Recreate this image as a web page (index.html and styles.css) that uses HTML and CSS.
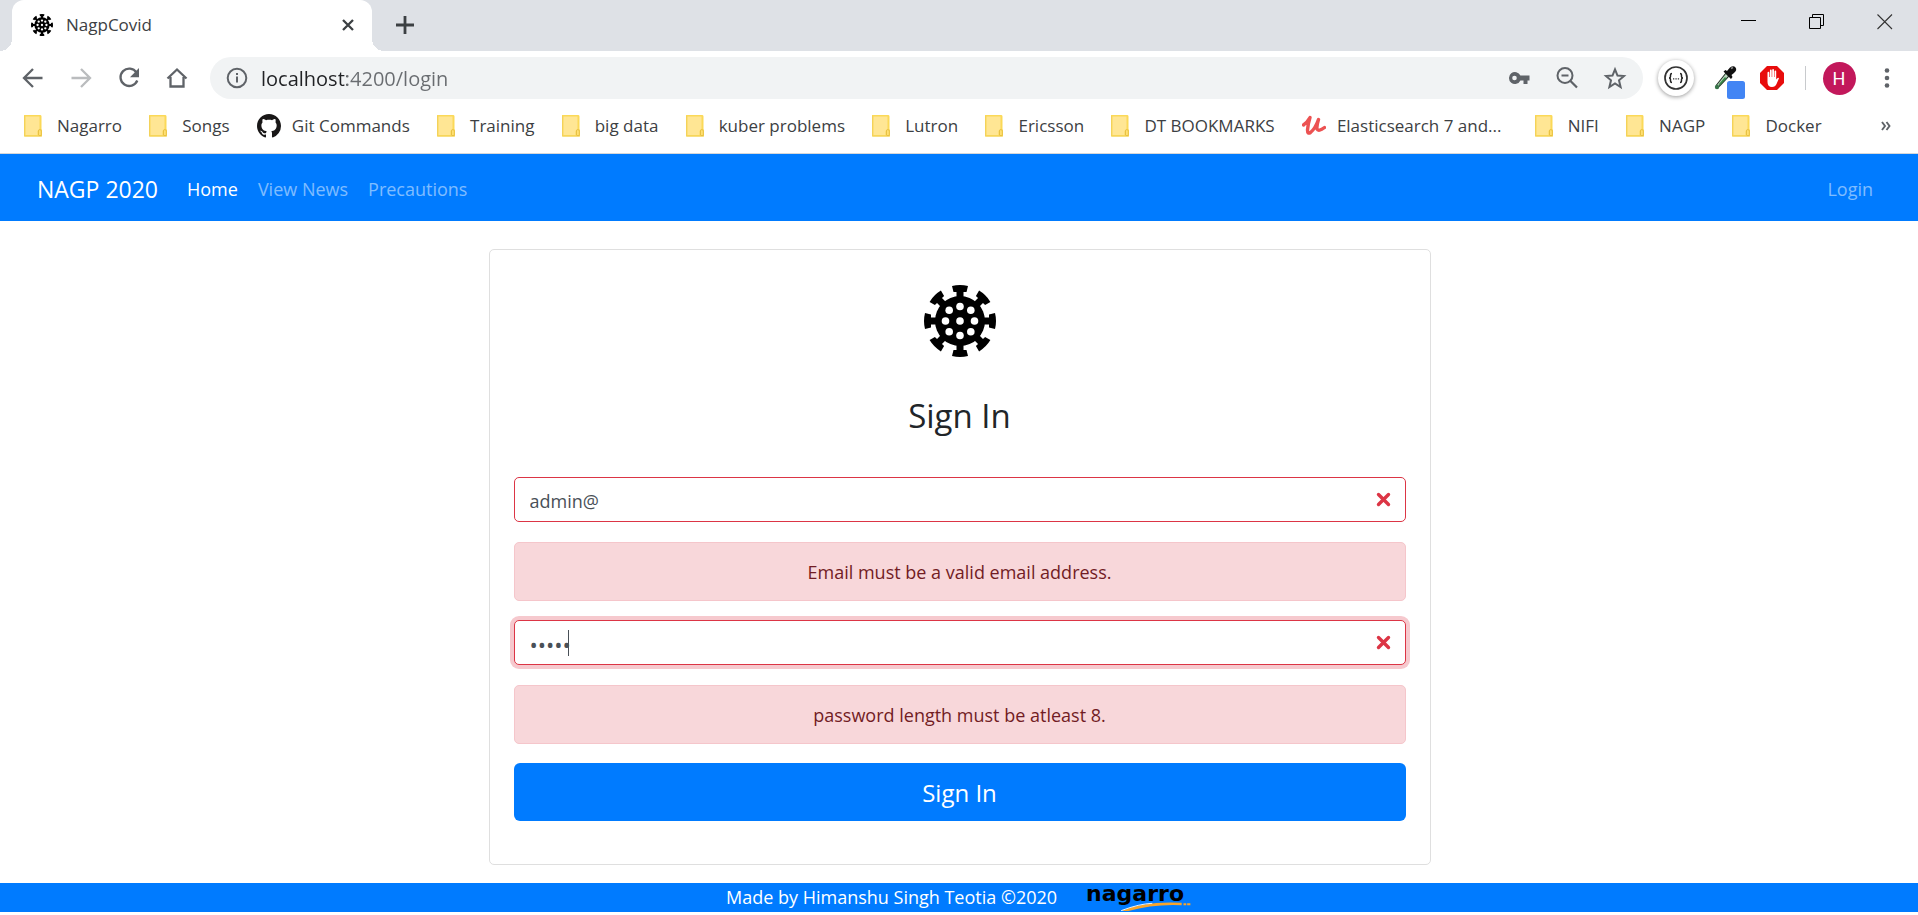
FILE: index.html
```html
<!DOCTYPE html>
<html lang="en">
<head>
<meta charset="utf-8">
<title>NagpCovid</title>
<link rel="stylesheet" href="styles.css">
</head>
<body>
<svg class="defs" aria-hidden="true">
  <symbol id="virus" viewBox="-36 -36 72 72">
    <path id="arm" d="M-3.5-22V-29H-6.5L-8-35Q0-37 8-35L6.5-29H3.5V-22Z"/>
    <use href="#arm" transform="rotate(45)"/><use href="#arm" transform="rotate(90)"/><use href="#arm" transform="rotate(135)"/>
    <use href="#arm" transform="rotate(180)"/><use href="#arm" transform="rotate(225)"/><use href="#arm" transform="rotate(270)"/><use href="#arm" transform="rotate(315)"/>
    <circle r="25"/>
    <g fill="#fff">
      <circle r="3.8"/><circle cx="14.5" r="3.8"/><circle cx="-14.5" r="3.8"/><circle cy="14.5" r="3.8"/><circle cy="-14.5" r="3.8"/>
      <circle cx="10.8" cy="10.8" r="3.8"/><circle cx="-10.8" cy="10.8" r="3.8"/><circle cx="10.8" cy="-10.8" r="3.8"/><circle cx="-10.8" cy="-10.8" r="3.8"/>
    </g>
  </symbol>
  <symbol id="folder" viewBox="0 0 18 22">
    <path d="M0 0H16.5Q17.5 0 17.5 1.5V14L18 15V21.5H0Z" fill="#fbd958"/>
    <path d="M1.5 1.5H15.5V14L13.5 16V20H1.5Z" fill="#ffe694"/>
    <path d="M.5 1V21H17.5" fill="none" stroke="#f3d25a"/>
    <path d="M14.5 20V16Q14.5 14.5 15.8 14.5T17.3 16V20.5H14.5" fill="#ffe072" stroke="#e8c144"/>
  </symbol>
</svg>

<header class="browser">
  <div class="tabstrip">
    <div class="tab">
      <svg class="favicon"><use href="#virus"/></svg>
      <span class="tab-title">NagpCovid</span>
      <button class="tab-close" aria-label="Close tab"><svg width="12" height="12" viewBox="0 0 12 12"><path d="M1 1L11 11M11 1L1 11" stroke="#3c4043" stroke-width="2.3"/></svg></button>
    </div>
    <button class="new-tab" aria-label="New tab"><svg width="18" height="18" viewBox="0 0 18 18"><path d="M9 0V18M0 9H18" stroke="#3c4043" stroke-width="2.8"/></svg></button>
    <div class="window-buttons">
      <button aria-label="Minimize"><svg width="16" height="16" viewBox="0 0 16 16"><path d="M0 6.5H15" stroke="#000"/></svg></button>
      <button aria-label="Restore"><svg width="16" height="16" viewBox="0 0 16 16"><path d="M.5 3.5H11.5V14.5H.5ZM3.5 3.5V.5H14.5V11.5H11.5" fill="none" stroke="#000"/></svg></button>
      <button aria-label="Close window"><svg width="16" height="16" viewBox="0 0 16 16"><path d="M.5 .5L15 15M15 .5L.5 15" stroke="#333" stroke-width="1.1"/></svg></button>
    </div>
  </div>

  <div class="toolbar">
    <button class="tool" aria-label="Back"><svg viewBox="0 0 24 24"><path d="M21.5 12H3.5M12 3L3 12L12 21" fill="none" stroke="#5f6368" stroke-width="2.3"/></svg></button>
    <button class="tool" aria-label="Forward"><svg viewBox="0 0 24 24"><path d="M2.5 12H20.5M12 3L21 12L12 21" fill="none" stroke="#babcbe" stroke-width="2.3"/></svg></button>
    <button class="tool" aria-label="Reload"><svg viewBox="0 0 24 24"><path d="M19.5 6.5A8.7 8.7 0 1 0 20.3 14.5" fill="none" stroke="#5f6368" stroke-width="2.3"/><path d="M22 2V11.3H13Z" fill="#5f6368"/></svg></button>
    <button class="tool" aria-label="Home"><svg viewBox="0 0 24 24"><path d="M2.5 12.5L12 3.5L21.5 12.5M5.5 11V20.5H18.500V11" fill="none" stroke="#5f6368" stroke-width="2.3"/></svg></button>
    <div class="omnibox">
      <svg class="info" viewBox="0 0 24 24"><circle cx="12" cy="12" r="9.3" fill="none" stroke="#5f6368" stroke-width="2"/><path d="M12 10.5V16.5M12 7V9" stroke="#5f6368" stroke-width="2"/></svg>
      <input class="url" type="text" value="localhost:4200/login" aria-label="Address">
      <button class="tool" aria-label="Saved password"><svg viewBox="0 0 24 24"><path d="M13.4 9.5A6 6 0 1 0 13.4 14.5H16.5V18H20.5V14.5H22.5V9.500ZM7.500 14.300A2.300 2.300 0 1 1 7.500 9.700A2.300 2.300 0 0 1 7.500 14.300Z" fill="#5f6368"/></svg></button>
      <button class="tool" aria-label="Zoom out"><svg viewBox="0 0 24 24"><circle cx="10" cy="9.5" r="7.5" fill="none" stroke="#5f6368" stroke-width="2"/><path d="M6.5 9.5H13.5M15 14.5L22 21.5" stroke="#5f6368" stroke-width="2.2"/></svg></button>
      <button class="tool" aria-label="Bookmark"><svg viewBox="0 0 24 24"><path d="M12 3.3L14.5 9.5L21 10L16 14.3L17.6 21L12 17.4L6.4 21L8 14.3L3 10L9.5 9.5Z" fill="none" stroke="#5f6368" stroke-width="2"/></svg></button>
    </div>
    <button class="tool" aria-label="JSON extension"><span class="json-badge"><svg viewBox="0 0 24 24"><circle cx="12" cy="12" r="11" fill="none" stroke="#333" stroke-width="1.7"/><path d="M8 7.500Q6.500 7.500 6.500 9V10.500Q6.500 12 5 12Q6.500 12 6.500 13.500V15Q6.500 16.500 8 16.500M16 7.500Q17.500 7.500 17.500 9V10.500Q17.500 12 19 12Q17.500 12 17.500 13.500V15Q17.500 16.500 16 16.500" fill="none" stroke="#222" stroke-width="1.5"/><path d="M9 12.8H10.3M11.4 12.8H12.7M13.8 12.8H15.1" stroke="#333" stroke-width="1.2"/></svg></span></button>
    <button class="tool picker" aria-label="Color picker"><svg viewBox="-5 -2 34 34"><path d="M14 10L17 13L8.500 22L5.500 25L4.500 22Z" fill="#b9d5bd" stroke="#26382a" stroke-width="1.1"/><path d="M6.500 21.500L13 14L14.500 15.500L8 22Z" fill="#388849"/><circle cx="5" cy="24" r="2.2" fill="#38754a"/><path d="M11.500 8.500L13.500 7L15 8L18 4.500Q21.500 2 23.500 4.500T22 10L19.500 12L20.500 14L19 16Z" fill="#111"/><path d="M19 5.500L21 4.500" stroke="#888" stroke-width="1.5"/><rect x="15" y="18" width="18" height="18" rx="2.5" fill="#4285f4"/></svg></button>
    <button class="tool" aria-label="Ad blocker"><svg viewBox="0 0 24 24"><path d="M7 0H17L24 7V17L17 24H7L0 17V7Z" fill="#e80c0c"/><path d="M7.500 13V7Q7.500 5.700 8.400 5.700T9.300 7V11H9.900V4.800Q9.900 3.600 10.800 3.600T11.700 4.800V11H12.200V4.200Q12.200 3 13.100 3T14 4.200V11H14.500V5.500Q14.500 4.400 15.400 4.400T16.200 5.500V13.500L17.600 12Q18.700 11.500 19 12.300L16.500 18Q15.300 21 12 21Q7.500 21 7.500 16Z" fill="#fff"/></svg></button>
    <span class="divider"></span>
    <button class="tool" aria-label="Profile"><span class="avatar">H</span></button>
    <button class="tool" aria-label="Menu"><svg viewBox="0 0 24 24" fill="#5f6368"><circle cx="12" cy="4.5" r="2.3"/><circle cx="12" cy="12" r="2.3"/><circle cx="12" cy="19.5" r="2.3"/></svg></button>
  </div>

  <nav class="bookmarks" aria-label="Bookmarks">
    <a href="#"><svg class="folder"><use href="#folder"/></svg>Nagarro</a>
    <a href="#"><svg class="folder"><use href="#folder"/></svg>Songs</a>
    <a href="#" class="site"><svg viewBox="0 0 16 16"><path fill="#191717" d="M8 0C3.580 0 0 3.580 0 8c0 3.540 2.290 6.530 5.470 7.590.4.070.55-.17.55-.38 0-.19-.01-.82-.01-1.490-2.010.37-2.530-.49-2.690-.94-.09-.23-.48-.94-.82-1.130-.28-.15-.68-.52-.01-.53.63-.01 1.080.58 1.230.82.72 1.210 1.870.87 2.330.66.07-.52.28-.87.51-1.070-1.780-.2-3.640-.89-3.640-3.950 0-.87.31-1.590.82-2.150-.08-.2-.36-1.020.08-2.120 0 0 .67-.21 2.200.82.64-.18 1.320-.27 2-.27s1.360.09 2 .27c1.530-1.040 2.200-.82 2.200-.82.44 1.100.16 1.920.08 2.120.51.56.82 1.270.82 2.150 0 3.070-1.870 3.750-3.650 3.950.29.25.54.73.54 1.480 0 1.070-.01 1.930-.01 2.200 0 .21.15.46.55.38A8.010 8.010 0 0 0 16 8c0-4.420-3.580-8-8-8z"/></svg>Git Commands</a>
    <a href="#"><svg class="folder"><use href="#folder"/></svg>Training</a>
    <a href="#"><svg class="folder"><use href="#folder"/></svg>big data</a>
    <a href="#"><svg class="folder"><use href="#folder"/></svg>kuber problems</a>
    <a href="#"><svg class="folder"><use href="#folder"/></svg>Lutron</a>
    <a href="#"><svg class="folder"><use href="#folder"/></svg>Ericsson</a>
    <a href="#"><svg class="folder"><use href="#folder"/></svg>DT BOOKMARKS</a>
    <a href="#" class="site long"><svg viewBox="0 0 24 24"><path d="M1.500 11Q5 8.500 8 3.500Q6 10 5.500 16Q5.500 20.500 8.500 18.500Q13 15 16.500 5.500Q14.500 12 15 15Q16.500 18 22.500 13.500" fill="none" stroke="#ec5252" stroke-width="3.4" stroke-linecap="round" stroke-linejoin="round"/></svg>Elasticsearch 7 and...</a>
    <a href="#"><svg class="folder"><use href="#folder"/></svg>NIFI</a>
    <a href="#"><svg class="folder"><use href="#folder"/></svg>NAGP</a>
    <a href="#"><svg class="folder"><use href="#folder"/></svg>Docker</a>
    <button class="more" aria-label="More bookmarks"><svg width="10" height="10" viewBox="0 0 10 10"><path d="M1 1L4 5L1 9M5.5 1L8.5 5L5.5 9" fill="none" stroke="#5f6368" stroke-width="1.9"/></svg></button>
  </nav>
</header>

<nav class="navbar" aria-label="Main">
  <a class="brand" href="#">NAGP 2020</a>
  <a class="active" href="#">Home</a>
  <a href="#">View News</a>
  <a href="#">Precautions</a>
  <a class="login" href="#">Login</a>
</nav>

<main class="content">
  <form class="card">
    <svg class="logo"><use href="#virus"/></svg>
    <h1>Sign In</h1>
    <div class="field">
      <input class="invalid" type="text" value="admin@" aria-label="Email">
      <svg class="cross" viewBox="0 0 12 12"><path d="M2 2L10 10M10 2L2 10" stroke="#dc3545" stroke-width="2.7" stroke-linecap="round"/></svg>
    </div>
    <p class="alert" role="alert">Email must be a valid email address.</p>
    <div class="field">
      <input class="invalid focused" type="password" value="admin" aria-label="Password">
      <span class="caret"></span>
      <svg class="cross" viewBox="0 0 12 12"><path d="M2 2L10 10M10 2L2 10" stroke="#dc3545" stroke-width="2.7" stroke-linecap="round"/></svg>
    </div>
    <p class="alert" role="alert">password length must be atleast 8.</p>
    <button class="submit" type="button">Sign In</button>
  </form>
</main>

<footer class="footer">
  <span>Made by Himanshu Singh Teotia ©2020</span>
  <span class="nagarro">nagarro
    <svg viewBox="0 0 76 12"><path d="M0 11Q25 0 66 2V4.500Q35 3 8 11Z" fill="#f9a52b"/><path d="M0 10.500Q20 3 34 2.500" fill="none" stroke="#fff" stroke-width="1"/><path d="M68 3.500H71M72 3.500H75.500" stroke="#f9a52b" stroke-width="2"/></svg>
  </span>
</footer>
</body>
</html>
```
FILE: styles.css
```css
* { box-sizing: border-box; }
body {
  margin: 0;
  background: #fff;
  color: #212529;
  font: 18px/28px "Open Sans", "Noto Sans", sans-serif;
}
button { border: 0; padding: 0; background: none; font: inherit; color: inherit; }
a { color: inherit; text-decoration: none; }
.defs { position: absolute; width: 0; height: 0; }

.browser { border-bottom: 1px solid #d5d7da; color: #3c4043; }
.tabstrip { display: flex; align-items: flex-start; height: 51px; padding-left: 12px; background: #dee1e6; }
.tab {
  position: relative;
  display: flex;
  align-items: center;
  width: 360px;
  height: 51px;
  padding: 0 18px 2px 19px;
  background: #fff;
  border-radius: 12px 12px 0 0;
}
.tab::before, .tab::after {
  content: "";
  position: absolute;
  bottom: 0;
  width: 12px;
  height: 12px;
}
.tab::before { right: 100%; background: radial-gradient(circle at 0 0, #dee1e6 12px, #fff 12px); }
.tab::after { left: 100%; background: radial-gradient(circle at 100% 0, #dee1e6 12px, #fff 12px); }
.favicon { width: 22px; height: 22px; margin-right: 13px; }
.tab-title { flex: 1; font-size: 17px; }
.tab-close svg, .new-tab svg, .window-buttons svg { display: block; }
.new-tab { padding: 16px 24px; }
.window-buttons { display: flex; margin-left: auto; }
.window-buttons button { width: 68px; padding: 14px 25px 14px 27px; }

.toolbar { display: flex; align-items: center; padding: 6px 7px 0 9px; }
.tool { display: flex; align-items: center; justify-content: center; width: 48px; height: 42px; flex: none; }
.tool svg { width: 24px; height: 24px; }
.omnibox {
  display: flex;
  flex: 1;
  align-items: center;
  margin: 0 9px;
  padding: 0 4px 0 15px;
  border-radius: 21px;
  background: #f1f3f4;
}
.info { width: 24px; height: 24px; margin-right: 12px; }
.url {
  flex: 1;
  height: 30px;
  padding: 0;
  border: 0;
  font: inherit;
  font-size: 20px;
  color: transparent;
  background: linear-gradient(to right, #202124 86px, #696c70 86px);
  -webkit-background-clip: text;
  background-clip: text;
}
.json-badge {
  display: flex;
  align-items: center;
  justify-content: center;
  width: 36px;
  height: 36px;
  border-radius: 50%;
  background: #fff;
  box-shadow: 0 1px 4px rgba(0, 0, 0, .4);
}
.tool.picker svg { width: 34px; height: 34px; overflow: visible; }
.divider { width: 1px; height: 24px; margin: 0 9px; background: #c8cacd; }
.avatar { width: 33px; height: 33px; border-radius: 50%; background: #c2185b; color: #fff; font: 18px/33px Roboto, sans-serif; }

.bookmarks { display: flex; align-items: center; justify-content: space-between; height: 54px; padding: 0 27px 0 24px; font-size: 17px; }
.bookmarks a { display: flex; align-items: center; gap: 15px; white-space: nowrap; }
.bookmarks a.site { gap: 11px; }
.bookmarks a.long { margin-right: 6px; }
.folder { width: 18px; height: 22px; }
.site svg { width: 24px; height: 24px; }
.more { margin-left: 32px; }
.more svg { display: block; }

.navbar { display: flex; align-items: center; gap: 20px; height: 67px; padding: 2px 45px 0 37px; background: #007bff; color: rgba(255, 255, 255, .5); }
.brand { margin-right: 9px; font-size: 23px; color: #fff; }
.active { color: #fff; }
.login { margin-left: auto; }

.content { width: 50%; margin: 0 auto; padding: 28px 8px 18px 9px; }
.card { display: flex; flex-direction: column; padding: 35px 24px 43px; border: 1px solid #dfdfdf; border-radius: 5px; }
.logo { width: 72px; height: 72px; margin: 0 auto 38px; }
h1 { margin: 0 0 40px; font-size: 33px; line-height: 42px; font-weight: 400; text-align: center; }
.field { position: relative; display: flex; }
.field input {
  flex: 1;
  height: 45px;
  padding: 2px 50px 0 15px;
  border: 1px solid #dc3545;
  border-radius: 5px;
  background: #fff;
  font: inherit;
  color: #495057;
}
.field .focused { box-shadow: 0 0 0 4px #f6c9ce; font-size: 22px; }
.cross { position: absolute; top: 15px; right: 15px; width: 15px; height: 15px; }
.caret { position: absolute; top: 10px; left: 54px; width: 1px; height: 26px; background: #495057; }
.alert {
  margin: 20px 0 19px;
  padding: 16px 15px 14px;
  line-height: 27px;
  text-align: center;
  color: #721c24;
  background: #f8d7da;
  border: 1px solid #f5c6cb;
  border-radius: 5px;
}
.submit { height: 58px; padding-top: 2px; border-radius: 6px; background: #007bff; color: #fff; font-size: 24px; }

.footer { display: flex; justify-content: center; gap: 29px; height: 29px; background: #007bff; color: #fff; line-height: 29px; }
.nagarro { position: relative; padding-right: 8px; font: bold 22px/22px "DejaVu Sans", sans-serif; color: #000; }
.nagarro svg { position: absolute; top: 18px; left: 32px; width: 76px; height: 11px; }
```
